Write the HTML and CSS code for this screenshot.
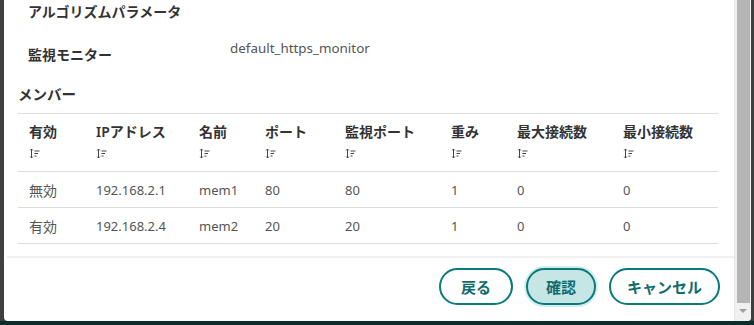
FILE: index.html
```html
<!DOCTYPE html>
<html lang="ja">
<head>
<meta charset="utf-8">
<link rel="stylesheet" href="styles.css">
</head>
<body>
<div class="screen">
  <div class="modal">
    <div class="content">
      <h3 class="section-title">アルゴリズムパラメータ</h3>
      <div class="param-row">
        <span class="param-label">監視モニター</span>
        <span class="param-value">default_https_monitor</span>
      </div>
      <h3 class="members-title">メンバー</h3>
      <table class="members">
        <thead>
          <tr>
            <th class="c1">有効<i class="sort"><svg viewBox="0 0 11 11" width="11" height="11"><path d="M2.5 1v9M1.2 2.4L2.5 1l1.3 1.4M1.2 8.6L2.5 10l1.3-1.4M5.5 3h5M5.5 5.5h3.5M5.5 8h2" fill="none" stroke="#444" stroke-width="1"/></svg></i></th>
            <th class="c2">IPアドレス<i class="sort"><svg viewBox="0 0 11 11" width="11" height="11"><path d="M2.5 1v9M1.2 2.4L2.5 1l1.3 1.4M1.2 8.6L2.5 10l1.3-1.4M5.5 3h5M5.5 5.5h3.5M5.5 8h2" fill="none" stroke="#444" stroke-width="1"/></svg></i></th>
            <th class="c3">名前<i class="sort"><svg viewBox="0 0 11 11" width="11" height="11"><path d="M2.5 1v9M1.2 2.4L2.5 1l1.3 1.4M1.2 8.6L2.5 10l1.3-1.4M5.5 3h5M5.5 5.5h3.5M5.5 8h2" fill="none" stroke="#444" stroke-width="1"/></svg></i></th>
            <th class="c4">ポート<i class="sort"><svg viewBox="0 0 11 11" width="11" height="11"><path d="M2.5 1v9M1.2 2.4L2.5 1l1.3 1.4M1.2 8.6L2.5 10l1.3-1.4M5.5 3h5M5.5 5.5h3.5M5.5 8h2" fill="none" stroke="#444" stroke-width="1"/></svg></i></th>
            <th class="c5">監視ポート<i class="sort"><svg viewBox="0 0 11 11" width="11" height="11"><path d="M2.5 1v9M1.2 2.4L2.5 1l1.3 1.4M1.2 8.6L2.5 10l1.3-1.4M5.5 3h5M5.5 5.5h3.5M5.5 8h2" fill="none" stroke="#444" stroke-width="1"/></svg></i></th>
            <th class="c6">重み<i class="sort"><svg viewBox="0 0 11 11" width="11" height="11"><path d="M2.5 1v9M1.2 2.4L2.5 1l1.3 1.4M1.2 8.6L2.5 10l1.3-1.4M5.5 3h5M5.5 5.5h3.5M5.5 8h2" fill="none" stroke="#444" stroke-width="1"/></svg></i></th>
            <th class="c7">最大接続数<i class="sort"><svg viewBox="0 0 11 11" width="11" height="11"><path d="M2.5 1v9M1.2 2.4L2.5 1l1.3 1.4M1.2 8.6L2.5 10l1.3-1.4M5.5 3h5M5.5 5.5h3.5M5.5 8h2" fill="none" stroke="#444" stroke-width="1"/></svg></i></th>
            <th class="c8">最小接続数<i class="sort"><svg viewBox="0 0 11 11" width="11" height="11"><path d="M2.5 1v9M1.2 2.4L2.5 1l1.3 1.4M1.2 8.6L2.5 10l1.3-1.4M5.5 3h5M5.5 5.5h3.5M5.5 8h2" fill="none" stroke="#444" stroke-width="1"/></svg></i></th>
          </tr>
        </thead>
        <tbody>
          <tr><td class="ja">無効</td><td>192.168.2.1</td><td>mem1</td><td>80</td><td>80</td><td>1</td><td>0</td><td>0</td></tr>
          <tr><td class="ja">有効</td><td>192.168.2.4</td><td>mem2</td><td>20</td><td>20</td><td>1</td><td>0</td><td>0</td></tr>
        </tbody>
      </table>
      <div class="footer">
        <button class="btn">戻る</button>
        <button class="btn btn-focus">確認</button>
        <button class="btn">キャンセル</button>
      </div>
    </div>
    <div class="scrollbar">
      <div class="thumb"></div>
      <div class="arrow"></div>
    </div>
  </div>
  <div class="bottom-strip"></div>
</div>
</body>
</html>
```
FILE: styles.css
```css
html, body {
  margin: 0;
  padding: 0;
}
body {
  width: 754px;
  height: 325px;
  overflow: hidden;
  background: #3f3f3f;
  font-family: "Noto Sans", "Noto Sans CJK JP", sans-serif;
}
.screen {
  display: flex;
  flex-direction: column;
  height: 325px;
}
.modal {
  margin-left: 4px;
  width: 747px;
  height: 321px;
  background: #fff;
  border-radius: 0 0 4px 4px;
  display: flex;
  overflow: hidden;
}
.content {
  flex: 1;
  padding: 0 0 0 14px;
}
.section-title {
  margin: 0;
  padding: 2px 0 0 10px;
  font-size: 14px;
  font-weight: 600;
  color: #333;
  line-height: 20px;
}
.param-row {
  display: flex;
  padding: 21px 0 0 10px;
  height: 30px;
}
.param-label {
  width: 202px;
  font-size: 14px;
  font-weight: 600;
  color: #333;
  padding-top: 2px;
  line-height: 20px;
}
.param-value {
  font-size: 13.4px;
  color: #555;
  line-height: 18px;
  margin-top: -4px;
}
.members-title {
  margin: 0;
  padding-top: 11px;
  font-size: 14.5px;
  font-weight: 600;
  color: #333;
  line-height: 20px;
}
.members {
  margin-top: 9px;
  width: 700px;
  border-collapse: collapse;
  border-top: 1px solid #dcdcdc;
}
.members th {
  text-align: left;
  font-size: 14px;
  font-weight: 600;
  color: #333;
  padding: 9px 0 10px 11px;
  line-height: 18px;
  vertical-align: top;
  border-bottom: 1px solid #dcdcdc;
}
.sort {
  display: block;
  margin-top: 7px;
  height: 13px;
  line-height: 0;
}
.members td {
  font-size: 13px;
  color: #555;
  padding: 0 0 0 11px;
  height: 35px;
  border-bottom: 1px solid #dcdcdc;
}
.members td.ja {
  font-size: 14px;
}
.c1 { width: 56px; }
.c2 { width: 92px; }
.c3 { width: 55px; }
.c4 { width: 69px; }
.c5 { width: 95px; }
.c6 { width: 55px; }
.c7 { width: 95px; }
.footer {
  margin: 12px 0 0 -11px;
  border-top: 2px solid #f0f0f0;
  display: flex;
  justify-content: flex-end;
  gap: 12px;
  padding: 10px 14px 0 0;
}
.btn {
  height: 37px;
  border: 2px solid #0b7a7a;
  border-radius: 19px;
  background: #fff;
  color: #0e6c6c;
  font-family: "Noto Sans", "Noto Sans CJK JP", sans-serif;
  font-size: 15px;
  font-weight: 700;
  padding: 0 16px;
  min-width: 74px;
}
.btn-focus {
  background: #c6e5e5;
  min-width: 70px;
  box-shadow: 0 0 0 2px #d4ecec;
  margin: 0 1px;
}
.scrollbar {
  width: 16px;
  background: #f0f0f0;
  border-left: 1px solid #e4e4e4;
  display: flex;
  flex-direction: column;
  align-items: center;
}
.thumb {
  width: 13px;
  height: 303px;
  background: #b5b5b5;
}
.arrow {
  margin-top: 6px;
  width: 0;
  height: 0;
  border-left: 4px solid transparent;
  border-right: 4px solid transparent;
  border-top: 4px solid #a0a0a0;
}
.bottom-strip {
  height: 4px;
  background: #0c2b2b;
}
```
